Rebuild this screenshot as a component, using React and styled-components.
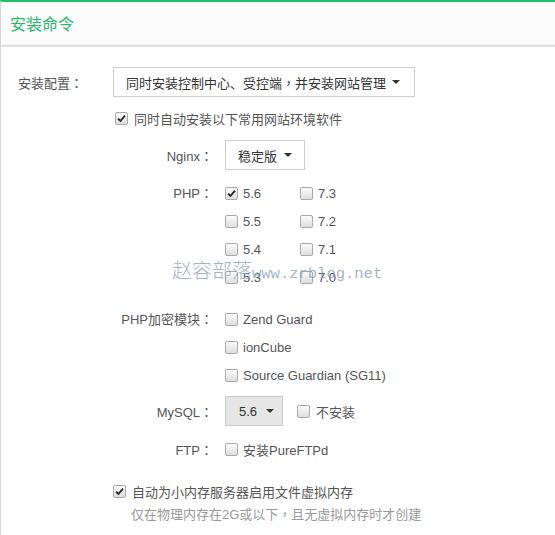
import React from "react";
import styled, { createGlobalStyle } from "styled-components";

const Global = createGlobalStyle`
  html, body { margin: 0; padding: 0; background: #fff; }
  body { font-family: "Liberation Sans", "Noto Sans CJK SC", sans-serif; font-size: 13px; color: #555; }
`;

const Panel = styled.div`
  position: relative;
  width: 555px;
  height: 535px;
  box-sizing: border-box;
  border-top: 2px solid #22c06b;
  border-left: 1px solid #d6d6d6;
  overflow: hidden;
`;

const Header = styled.div`
  height: 42px;
  display: flex;
  align-items: center;
  padding-left: 9px;
  background: #fcfcfc;
  border-bottom: 1px solid #f0f0f0;
  box-shadow: 0 2px 0 #e2e2e2;
  font-family: "Noto Sans CJK SC", sans-serif;
  font-size: 16px;
  color: #2ab86a;
`;

const Body = styled.div`
  padding: 22px 0 0 17px;
`;

const Row = styled.div`
  display: flex;
  align-items: ${(p) => (p.$top ? "flex-start" : "center")};
  margin-top: ${(p) => p.$mt || 0}px;
  height: ${(p) => p.$h || 30}px;
`;

const TopLabel = styled.div`
  width: 95px;
  font-family: "Noto Sans CJK SC", sans-serif;
`;

const Colon = styled.span`
  font-family: "Noto Sans CJK TC", sans-serif;
`;

const Sub = styled.div`
  margin-left: 95px;
`;

const Label = styled.div`
  width: 100px;
  text-align: right;
  margin-right: 12px;
  color: #555;
  height: ${(p) => (p.$line ? "28px" : "auto")};
  line-height: ${(p) => (p.$line ? "28px" : "normal")};
`;

const Select = styled.div`
  height: 30px;
  box-sizing: border-box;
  border: 1px solid #cccccc;
  background: ${(p) => (p.$grey ? "#e6e6e6" : "#fff")};
  display: flex;
  align-items: center;
  padding: 0 ${(p) => p.$pr || 14}px 0 ${(p) => p.$pl || 12}px;
  color: #333;
  width: ${(p) => p.$w}px;
`;

const SelectText = styled.span`
  flex: 1;
`;

const Caret = styled.span`
  width: 0;
  height: 0;
  border-left: 4px solid transparent;
  border-right: 4px solid transparent;
  border-top: 4px solid #333;
`;

const Box = styled.span`
  width: 11px;
  height: 11px;
  border: 1px solid #a9a9a9;
  border-radius: 2px;
  background: linear-gradient(#fbfbfb, #dedede);
  display: inline-flex;
  align-items: center;
  justify-content: center;
  flex: none;
`;

const Check = styled.label`
  display: inline-flex;
  align-items: center;
  gap: ${(p) => p.$gap || 5}px;
  color: ${(p) => p.$color || "#555"};
  margin-left: ${(p) => p.$ml || 0}px;
`;

const Grid = styled.div`
  display: grid;
  grid-template-columns: 75px 75px;
  grid-auto-rows: 28px;
  align-items: center;
`;

const Stack = styled.div`
  display: flex;
  flex-direction: column;
`;

const Item = styled.div`
  height: 28px;
  display: flex;
  align-items: center;
`;

const Note = styled.div`
  margin: 3px 0 0 18px;
  height: 20px;
  line-height: 20px;
  color: #999;
`;

const Watermark = styled.div`
  position: absolute;
  left: 171px;
  top: 253px;
  color: rgba(130, 155, 185, 0.75);
  white-space: nowrap;
  display: flex;
  align-items: baseline;
  pointer-events: none;
`;

const WmCn = styled.span`
  font-family: "Noto Sans CJK SC", serif;
  font-weight: 300;
  font-size: 20px;
`;

const WmEn = styled.span`
  font-family: "Liberation Mono", monospace;
  font-size: 15.5px;
`;

const Tick = () => (
  <svg width="9" height="9" viewBox="0 0 9 9">
    <path d="M1 4.6 L3.4 7 L8 1.6" fill="none" stroke="#222" strokeWidth="1.8" />
  </svg>
);

const CB = ({ checked, children, ...rest }) => (
  <Check {...rest}>
    <Box>{checked && <Tick />}</Box>
    {children && <span>{children}</span>}
  </Check>
);

export default function App() {
  return (
    <>
      <Global />
      <Panel>
        <Header>安装命令</Header>
        <Body>
          <Row>
            <TopLabel>安装配置<Colon>：</Colon></TopLabel>
            <Select $w={302}>
              <SelectText>同时安装控制中心、受控端<Colon>，</Colon>并安装网站管理</SelectText>
              <Caret />
            </Select>
          </Row>
          <Sub>
            <Row $mt={11} $h={20}>
              <CB checked $gap={6} $ml={2}>同时自动安装以下常用网站环境软件</CB>
            </Row>
            <Row $mt={12}>
              <Label>Nginx<Colon>：</Colon></Label>
              <Select $w={80} $pr={12}>
                <SelectText>稳定版</SelectText>
                <Caret />
              </Select>
            </Row>
            <Row $mt={9} $h={112} $top>
              <Label $line>PHP<Colon>：</Colon></Label>
              <Grid>
                <CB checked>5.6</CB>
                <CB>7.3</CB>
                <CB>5.5</CB>
                <CB>7.2</CB>
                <CB>5.4</CB>
                <CB>7.1</CB>
                <CB>5.3</CB>
                <CB>7.0</CB>
              </Grid>
            </Row>
            <Row $mt={14} $h={84} $top>
              <Label $line>PHP加密模块<Colon>：</Colon></Label>
              <Stack>
                <Item><CB>Zend Guard</CB></Item>
                <Item><CB>ionCube</CB></Item>
                <Item><CB>Source Guardian (SG11)</CB></Item>
              </Stack>
            </Row>
            <Row $mt={7}>
              <Label>MySQL<Colon>：</Colon></Label>
              <Select $w={58} $grey $pl={13} $pr={8}>
                <SelectText>5.6</SelectText>
                <Caret />
              </Select>
              <CB $ml={14} $gap={6}>不安装</CB>
            </Row>
            <Row $mt={9} $h={28}>
              <Label>FTP<Colon>：</Colon></Label>
              <CB>安装PureFTPd</CB>
            </Row>
            <Row $mt={18} $h={20}>
              <CB checked $gap={6}>自动为小内存服务器启用文件虚拟内存</CB>
            </Row>
            <Note>仅在物理内存在2G或以下<Colon>，</Colon>且无虚拟内存时才创建</Note>
          </Sub>
        </Body>
        <Watermark>
          <WmCn>赵容部落</WmCn>
          <WmEn>www.zrblog.net</WmEn>
        </Watermark>
      </Panel>
    </>
  );
}
